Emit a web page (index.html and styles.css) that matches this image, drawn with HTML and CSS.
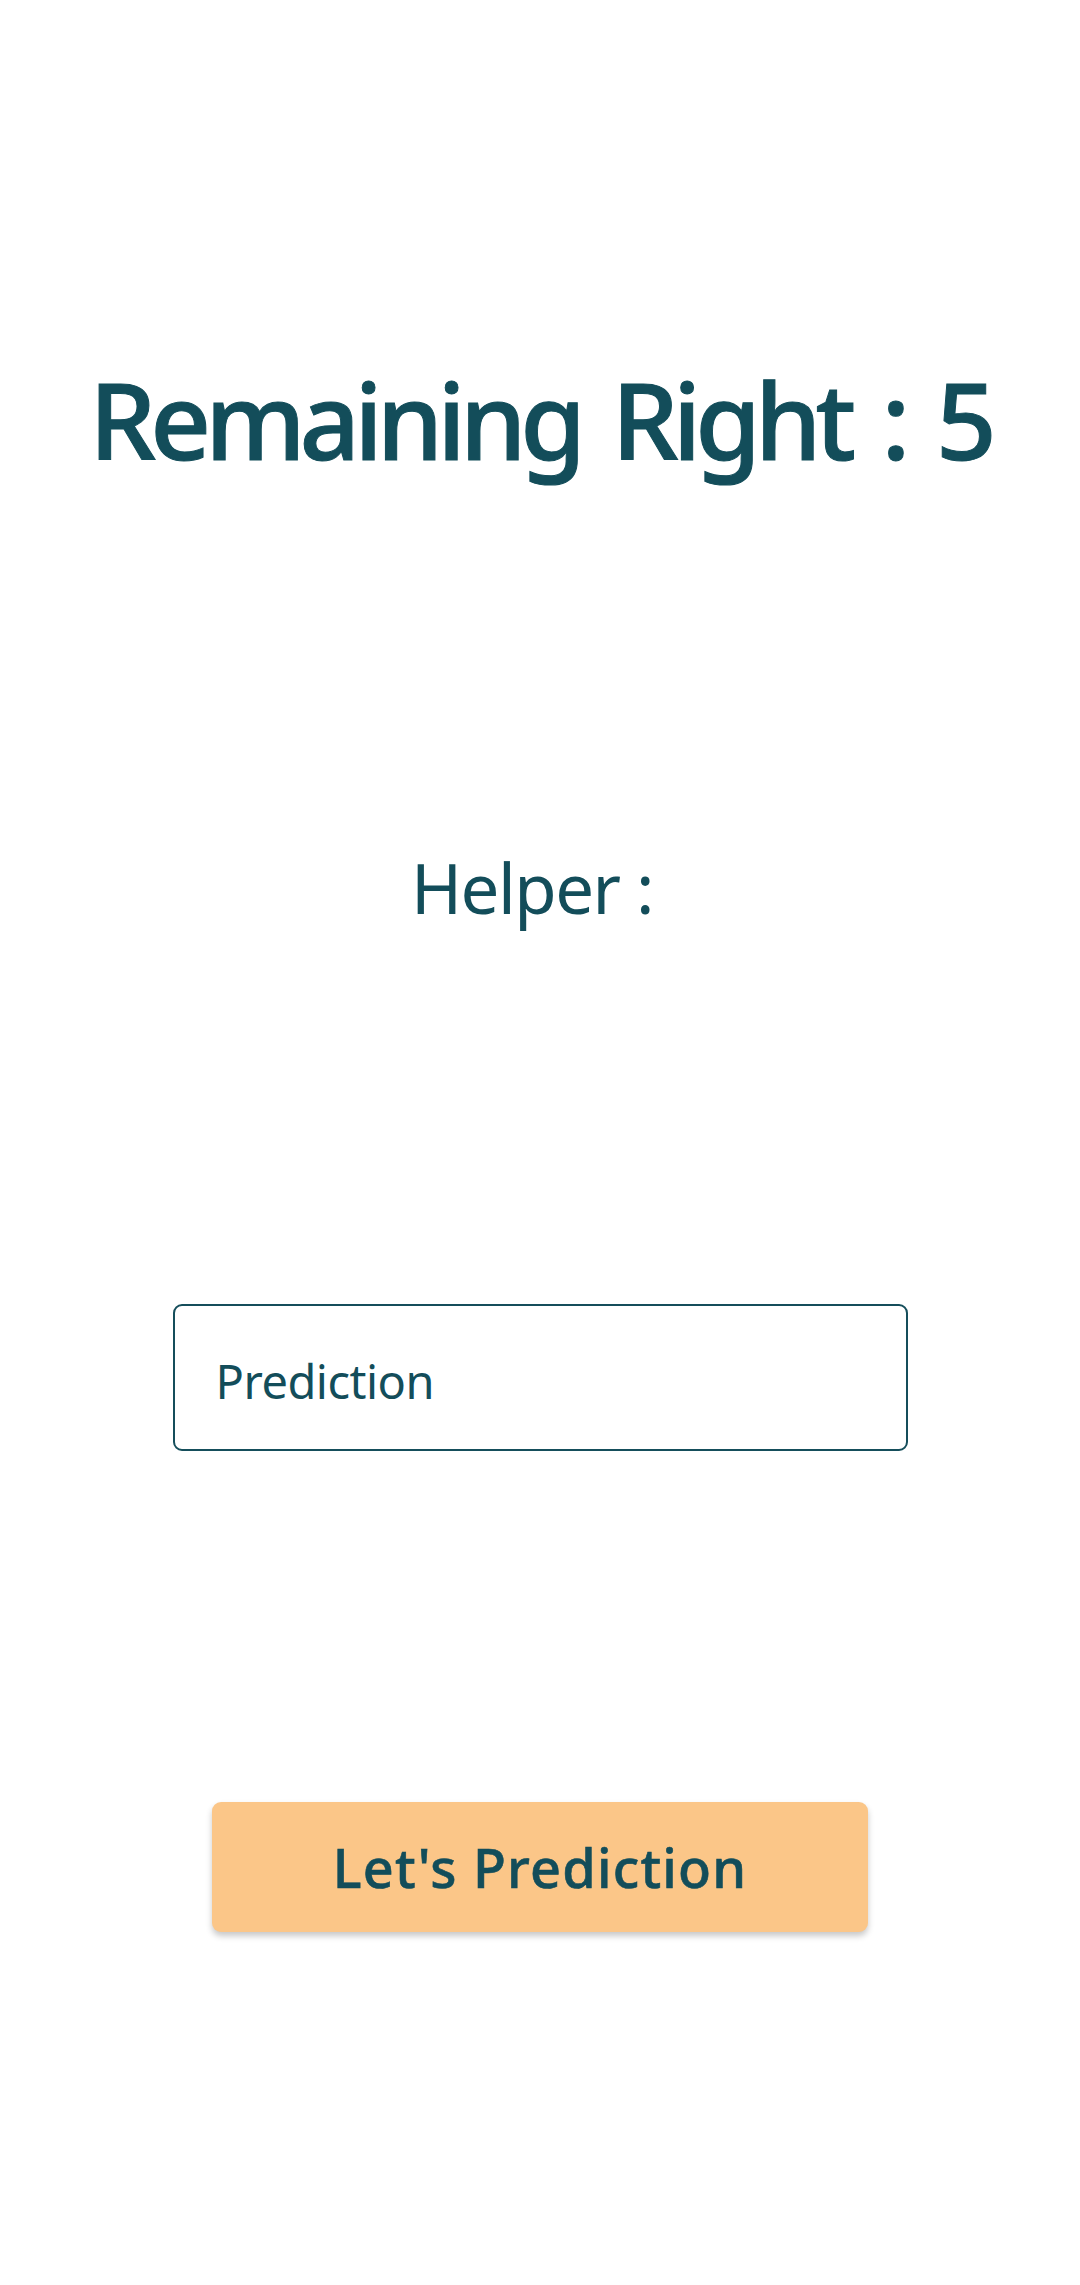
FILE: index.html
```html
<!DOCTYPE html>
<html lang="en">
<head>
<meta charset="utf-8">
<title>Prediction</title>
<link rel="stylesheet" href="styles.css">
</head>
<body>
<main class="screen">
  <h1 class="title">Remaining Right : 5</h1>
  <p class="helper">Helper :</p>
  <label class="field">
    <input class="field-input" type="text" placeholder="Prediction">
  </label>
  <button class="cta" type="button">Let's Prediction</button>
</main>
</body>
</html>
```

FILE: styles.css
```css
html, body {
  margin: 0;
  padding: 0;
  background: #ffffff;
}
body {
  font-family: "Noto Sans", "Open Sans", sans-serif;
  color: #134d5a;
}
.screen {
  display: flex;
  flex-direction: column;
  align-items: center;
  padding-top: 366px;
  min-height: 2285px;
  box-sizing: border-box;
}
.title {
  margin: 0;
  font-size: 106px;
  line-height: 1;
  font-weight: 500;
  letter-spacing: -6px;
  word-spacing: 10px;
  white-space: nowrap;
  -webkit-text-stroke: 1px #134d5a;
}
.helper {
  margin: 381px 0 0;
  font-size: 69px;
  line-height: 1;
  font-weight: 400;
  letter-spacing: -1.5px;
  padding-right: 16px;
}
.field {
  margin-top: 382px;
  width: 735px;
  height: 147px;
  box-sizing: border-box;
  border: 2.5px solid #154e5b;
  border-radius: 9px;
  display: flex;
  align-items: center;
  padding: 0 0 0 41px;
}
.field-input {
  border: none;
  outline: none;
  background: transparent;
  width: 100%;
  font-family: inherit;
  font-size: 47px;
  color: #134d5a;
  padding: 6px 0 0;
  letter-spacing: -0.5px;
}
.field-input::placeholder {
  color: #134d5a;
  opacity: 1;
}
.cta {
  margin-top: 351px;
  width: 656px;
  height: 130px;
  border: none;
  border-radius: 9px;
  background: #fbc688;
  color: #134d5a;
  font-family: inherit;
  font-size: 54px;
  font-weight: 500;
  letter-spacing: 1.2px;
  -webkit-text-stroke: 0.6px #134d5a;
  box-shadow: 0 4px 6px rgba(0, 0, 0, 0.22);
  cursor: pointer;
}
```
